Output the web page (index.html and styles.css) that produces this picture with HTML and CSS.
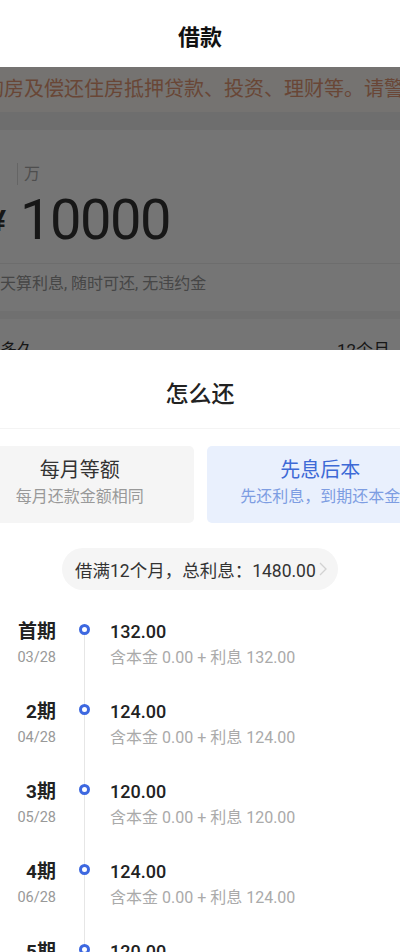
FILE: index.html
```html
<!DOCTYPE html>
<html lang="zh-CN">
<head>
	<meta charset="UTF-8">
	<title>借款</title>
	<link rel="stylesheet" href="styles.css">
</head>
<body>
	<div class="header">借款</div>

	<div class="backdrop">
		<div class="notice"><span>购房及偿还住房抵押贷款、投资、理财等。请警惕</span></div>
		<div class="gap"></div>
		<div class="loan">
			<div class="unit">万</div>
			<div class="amount"><span class="yen">¥</span><span class="num">10000</span></div>
			<div class="tip">天算利息, 随时可还, 无违约金</div>
			<div class="band"></div>
			<div class="term">
				<span class="term-label">借多久</span>
				<span class="term-value">12个月</span>
			</div>
		</div>
		<div class="mask"></div>
	</div>

	<div class="sheet">
		<div class="sheet-title">怎么还</div>
		<div class="options">
			<div class="option">
				<div class="option-name">每月等额</div>
				<div class="option-desc">每月还款金额相同</div>
			</div>
			<div class="option active">
				<div class="option-name">先息后本</div>
				<div class="option-desc">先还利息，到期还本金</div>
			</div>
		</div>
		<div class="summary-wrap">
			<div class="summary">
				借满12个月，总利息：1480.00
				<svg class="arrow" width="8" height="14" viewBox="0 0 8 14"><polyline points="1,1 7,7 1,13" fill="none" stroke="#d2d2d2" stroke-width="1.3"/></svg>
			</div>
		</div>
		<div class="plan">
			<div class="row">
				<div class="when"><div class="period">首期</div><div class="date">03/28</div></div>
				<div class="dot"></div>
				<div class="what"><div class="pay">132.00</div><div class="detail">含本金 0.00 + 利息 132.00</div></div>
			</div>
			<div class="row">
				<div class="when"><div class="period">2期</div><div class="date">04/28</div></div>
				<div class="dot"></div>
				<div class="what"><div class="pay">124.00</div><div class="detail">含本金 0.00 + 利息 124.00</div></div>
			</div>
			<div class="row">
				<div class="when"><div class="period">3期</div><div class="date">05/28</div></div>
				<div class="dot"></div>
				<div class="what"><div class="pay">120.00</div><div class="detail">含本金 0.00 + 利息 120.00</div></div>
			</div>
			<div class="row">
				<div class="when"><div class="period">4期</div><div class="date">06/28</div></div>
				<div class="dot"></div>
				<div class="what"><div class="pay">124.00</div><div class="detail">含本金 0.00 + 利息 124.00</div></div>
			</div>
			<div class="row">
				<div class="when"><div class="period">5期</div><div class="date">07/28</div></div>
				<div class="dot"></div>
				<div class="what"><div class="pay">120.00</div><div class="detail">含本金 0.00 + 利息 120.00</div></div>
			</div>
		</div>
	</div>
</body>
</html>
```

FILE: styles.css
```css
* {
	padding: 0;
	margin: 0;
	box-sizing: border-box;
}
html, body {
	height: 952px;
	overflow: hidden;
}
body {
	width: 400px;
	font-family: Roboto, "Noto Sans CJK SC", sans-serif;
	color: #333;
	background-color: #fff;
}
.header {
	height: 67px;
	padding-top: 23px;
	line-height: 30px;
	text-align: center;
	font-size: 22px;
	font-weight: 700;
	color: #111;
}

/* dimmed page behind the sheet */
.backdrop {
	position: relative;
	height: 283px;
	overflow: hidden;
}
.mask {
	position: absolute;
	left: 0;
	top: 0;
	right: 0;
	bottom: 0;
	background-color: rgba(0, 0, 0, 0.54);
}
.notice {
	height: 45px;
	line-height: 45px;
	white-space: nowrap;
	overflow: hidden;
	font-size: 20px;
	color: #e49a76;
	background-color: #fffaf6;
}
.notice span {
	display: inline-block;
	margin-left: -16px;
}
.gap {
	height: 18px;
	background-color: #f0f0f0;
}
.loan {
	padding-top: 33px;
}
.unit {
	margin-left: 17px;
	padding-left: 6px;
	border-left: 1px solid #ddd;
	line-height: 22px;
	font-size: 16px;
	color: #aaa;
}
.amount {
	display: flex;
	align-items: center;
	margin-top: 7px;
	height: 56px;
	padding-bottom: 15px;
	border-bottom: 1px solid #eee;
	box-sizing: content-box;
}
.yen {
	margin-left: -10px;
	margin-right: 14px;
	font-size: 30px;
	font-weight: 700;
	color: #333;
}
.num {
	font-size: 56px;
	line-height: 56px;
	font-weight: 400;
	letter-spacing: -1.5px;
	color: #333;
}
.tip {
	margin-top: 10px;
	line-height: 20px;
	font-size: 16px;
	color: #999;
}
.band {
	height: 8px;
	margin-top: 17px;
	background-color: #f5f5f5;
}
.term {
	display: flex;
	justify-content: space-between;
	padding: 20px 10px 0 0;
	line-height: 22px;
	font-size: 17px;
	color: #333;
}
.term-label {
	margin-left: -17px;
}

/* bottom sheet */
.sheet {
	background-color: #fff;
}
.sheet-title {
	padding: 31px 0 19px;
	line-height: 28px;
	text-align: center;
	font-size: 23px;
	font-weight: 500;
	color: #222;
	border-bottom: 1px solid #f4f4f4;
}
.options {
	display: flex;
	gap: 13px;
	margin: 17px -34px 0;
}
.option {
	flex: 1;
	height: 77px;
	padding-top: 12px;
	text-align: center;
	border-radius: 5px;
	background-color: #f5f5f5;
}
.option-name {
	line-height: 24px;
	font-size: 20px;
	color: #333;
}
.option-desc {
	margin-top: 5px;
	line-height: 20px;
	font-size: 16px;
	color: #999;
}
.option.active {
	background-color: #e9f0fd;
}
.option.active .option-name {
	color: #3d6ad6;
}
.option.active .option-desc {
	color: #7d9de2;
}
.summary-wrap {
	display: flex;
	justify-content: center;
	margin-top: 25px;
}
.summary {
	display: flex;
	align-items: center;
	width: 276px;
	height: 42px;
	padding-left: 13px;
	border-radius: 21px;
	font-size: 17.5px;
	color: #333;
	background-color: #f5f5f5;
}
.arrow {
	margin-left: 3px;
}

/* repayment timeline */
.plan {
	margin-top: 30px;
	background: linear-gradient(#e6e6e6, #e6e6e6) no-repeat 84px 10px / 1px 100%;
}
.row {
	display: grid;
	grid-template-columns: 66px 36px 1fr;
	height: 80px;
}
.when {
	padding-right: 10px;
	text-align: right;
}
.period {
	line-height: 24px;
	font-size: 19px;
	font-weight: 700;
	color: #222;
}
.date {
	margin-top: 4px;
	line-height: 20px;
	font-size: 14.5px;
	color: #999;
}
.dot {
	justify-self: center;
	width: 11px;
	height: 11px;
	margin-top: 4px;
	border: 3px solid #3d68e0;
	border-radius: 50%;
	background-color: #fff;
}
.what {
	padding-left: 8px;
}
.pay {
	line-height: 24px;
	font-size: 18px;
	font-weight: 500;
	color: #222;
}
.detail {
	margin-top: 4px;
	line-height: 20px;
	font-size: 16px;
	color: #aaa;
}
```
